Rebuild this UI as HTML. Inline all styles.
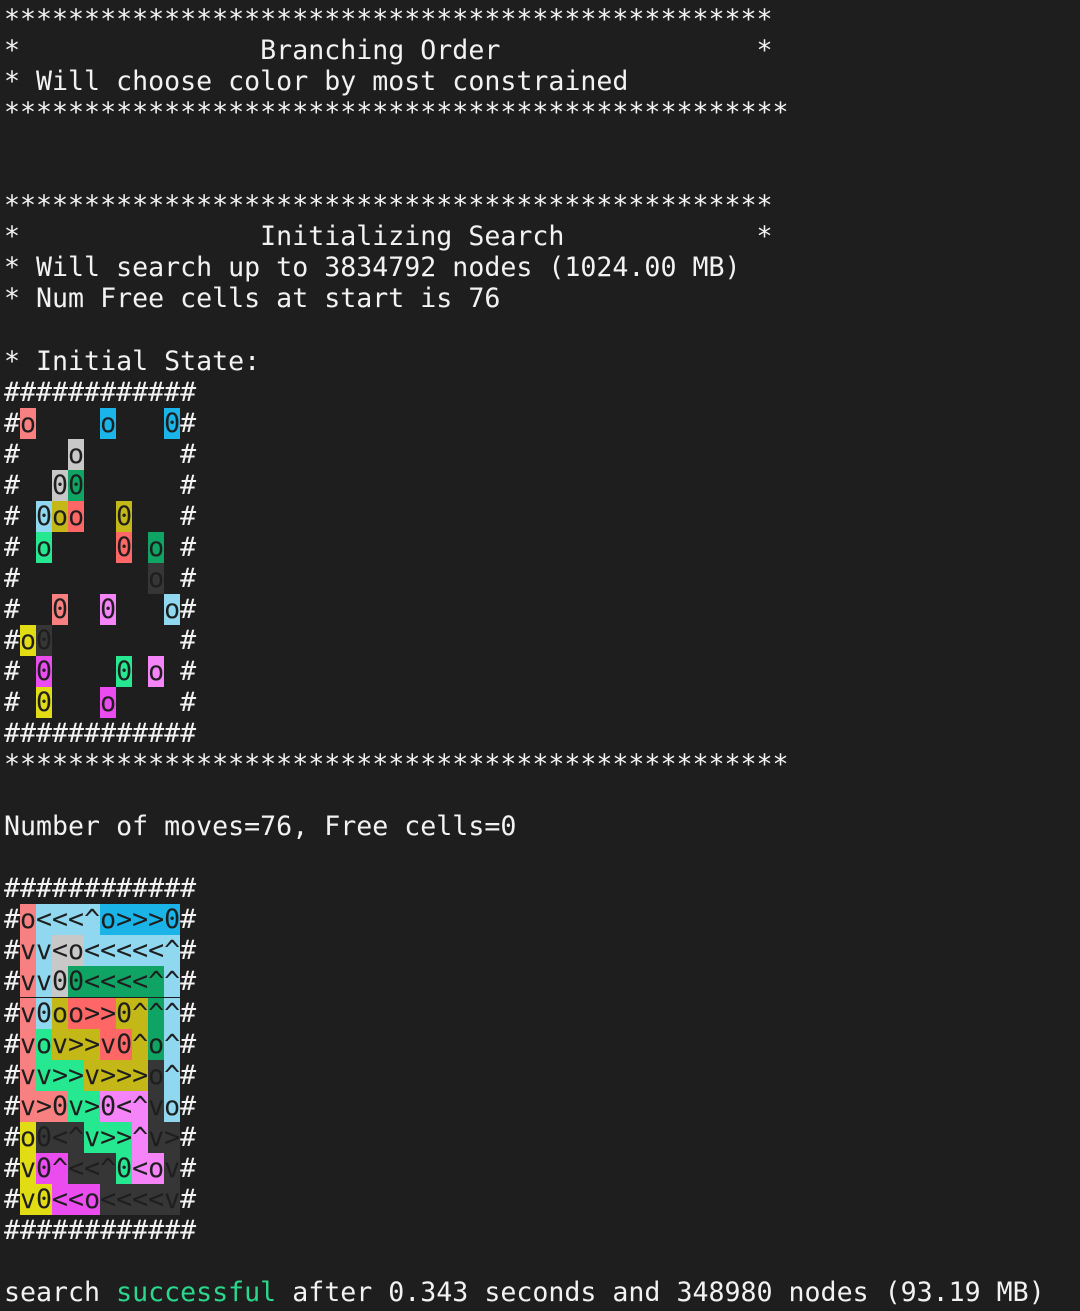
<!DOCTYPE html>
<html><head><meta charset="utf-8"><style>
html,body{margin:0;padding:0;background:#1e1e1e;width:1080px;height:1311px;overflow:hidden}
pre{margin:0;padding:4px 0 0 4px;font-family:"DejaVu Sans Mono","Liberation Mono",monospace;font-size:26.6px;line-height:31.05px;color:#f2f2f2;white-space:pre}
pre span{color:#1e1e1e}
.A{background:#f88080}.B{background:#1ab4e8}.C{background:#c8c8c8}.D{background:#10a464}
.E{background:#90d8f0}.F{background:#c4b818}.G{background:#ff6666}.H{background:#26e890}
.I{background:#363636}.J{background:#f484f8}.K{background:#e2dc14}.L{background:#ea4cf0}
.s{color:#2ad88c!important}
.cur{display:inline-block;width:16px;height:10px;background:#c8c8c8;vertical-align:top;margin-top:14px}
</style></head><body><pre>************************************************
*               Branching Order                *
* Will choose color by most constrained
*************************************************


************************************************
*               Initializing Search            *
* Will search up to 3834792 nodes (1024.00 MB)
* Num Free cells at start is 76

* Initial State:
############
#<span class="A">o</span>    <span class="B">o</span>   <span class="B">0</span>#
#   <span class="C">o</span>      #
#  <span class="C">0</span><span class="D">0</span>      #
# <span class="E">0</span><span class="F">o</span><span class="G">o</span>  <span class="F">0</span>   #
# <span class="H">o</span>    <span class="G">0</span> <span class="D">o</span> #
#        <span class="I">o</span> #
#  <span class="A">0</span>  <span class="J">0</span>   <span class="E">o</span>#
#<span class="K">o</span><span class="I">0</span>        #
# <span class="L">0</span>    <span class="H">0</span> <span class="J">o</span> #
# <span class="K">0</span>   <span class="L">o</span>    #
############
*************************************************

Number of moves=76, Free cells=0

############
#<span class="A">o</span><span class="E">&lt;&lt;&lt;^</span><span class="B">o&gt;&gt;&gt;0</span>#
#<span class="A">v</span><span class="E">v</span><span class="C">&lt;o</span><span class="E">&lt;&lt;&lt;&lt;&lt;^</span>#
#<span class="A">v</span><span class="E">v</span><span class="C">0</span><span class="D">0&lt;&lt;&lt;&lt;^</span><span class="E">^</span>#
#<span class="A">v</span><span class="E">0</span><span class="F">o</span><span class="G">o&gt;&gt;</span><span class="F">0^</span><span class="D">^</span><span class="E">^</span>#
#<span class="A">v</span><span class="H">o</span><span class="F">v&gt;&gt;</span><span class="G">v0</span><span class="F">^</span><span class="D">o</span><span class="E">^</span>#
#<span class="A">v</span><span class="H">v&gt;&gt;</span><span class="F">v&gt;&gt;&gt;</span><span class="I">o</span><span class="E">^</span>#
#<span class="A">v&gt;0</span><span class="H">v&gt;</span><span class="J">0&lt;^</span><span class="I">v</span><span class="E">o</span>#
#<span class="K">o</span><span class="I">0&lt;^</span><span class="H">v&gt;&gt;</span><span class="J">^</span><span class="I">v&gt;</span>#
#<span class="K">v</span><span class="L">0^</span><span class="I">&lt;&lt;^</span><span class="H">0</span><span class="J">&lt;o</span><span class="I">v</span>#
#<span class="K">v0</span><span class="L">&lt;&lt;o</span><span class="I">&lt;&lt;&lt;&lt;v</span>#
############

search <span class="s">successful</span> after 0.343 seconds and 348980 nodes (93.19 MB)
           <i class="cur"></i></pre></body></html>
